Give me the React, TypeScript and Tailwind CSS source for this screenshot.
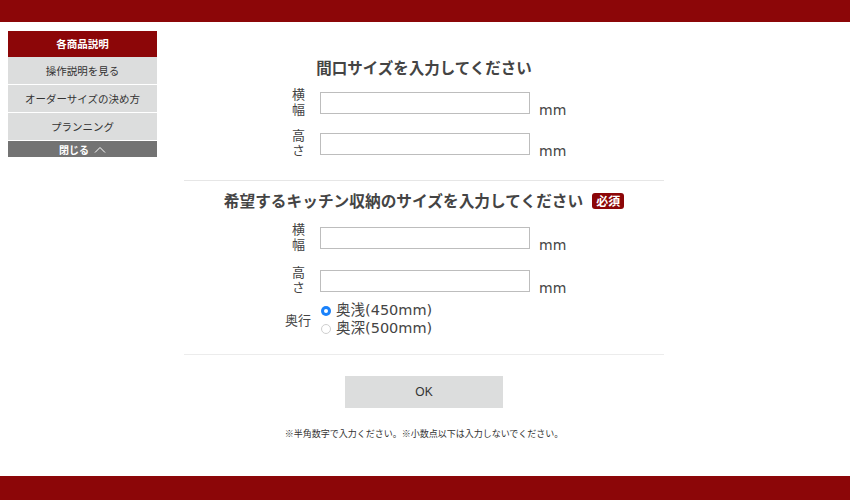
const jp = "font-['Noto_Sans_CJK_JP',sans-serif]"

const SizeRow = ({ label }: { label: string }) => (
  <div className="flex h-[30px] items-start pl-[100px]">
    <div className="flex w-[28px] justify-center">
      <span className="text-[13px] leading-[14px] tracking-[2px] text-[#444] [writing-mode:vertical-rl]">
        {label}
      </span>
    </div>
    <input
      type="text"
      className="ml-[8px] mt-[4px] h-[22px] w-[210px] border border-[#bdbdbd] bg-white outline-none"
    />
    <span className="ml-[9px] mt-[15px] font-['DejaVu_Sans',sans-serif] text-[14px] leading-[15px] text-[#444]">
      mm
    </span>
  </div>
)

const Radio = ({ checked, label }: { checked?: boolean; label: string }) => (
  <label className="flex h-[18px] items-center">
    {checked ? (
      <span className="flex h-[10px] w-[10px] items-center justify-center rounded-full bg-[#1a82fb]">
        <span className="h-[4px] w-[4px] rounded-full bg-white" />
      </span>
    ) : (
      <span className="h-[10px] w-[10px] rounded-full border border-[#cfcfcf] bg-white" />
    )}
    <span className="ml-[5px] font-['DejaVu_Sans','Noto_Sans_CJK_JP',sans-serif] text-[14.5px] text-[#444]">
      {label}
    </span>
  </label>
)

const Sidebar = () => (
  <nav className={`ml-2 mt-[9px] w-[149px] self-start text-center text-[10.5px] ${jp}`}>
    <div className="flex h-[26px] items-center justify-center bg-[#8c0608] font-bold text-white">
      各商品説明
    </div>
    {['操作説明を見る', 'オーダーサイズの決め方', 'プランニング'].map((t) => (
      <div
        key={t}
        className="flex h-[28px] items-center justify-center border-b border-white bg-[#dcdddd] text-[#333]"
      >
        {t}
      </div>
    ))}
    <div className="flex h-[16px] items-center justify-center gap-[5px] bg-[#737373] text-[10px] font-bold text-white">
      閉じる
      <svg width="12" height="7" viewBox="0 0 12 7" fill="none">
        <polyline points="1,6.5 6,1.5 11,6.5" stroke="white" strokeWidth="1" />
      </svg>
    </div>
  </nav>
)

export default function App() {
  return (
    <div className={`flex h-[500px] w-[850px] flex-col bg-white ${jp}`}>
      <div className="h-[22px] bg-[#8c0608]" />
      <div className="flex flex-1">
        <Sidebar />
        <main className="ml-[27px] w-[480px]">
          <h2 className="mt-[35px] text-center text-[15.5px] font-bold leading-[20px] text-[#444]">
            間口サイズを入力してください
          </h2>
          <div className="mt-[11px]">
            <SizeRow label="横幅" />
          </div>
          <div className="mt-[11px]">
            <SizeRow label="高さ" />
          </div>

          <div className="mt-[21px] h-px bg-[#e6e6e6]" />

          <div className="mt-[10px] flex items-center justify-center gap-[9px]">
            <h2 className="text-[15.7px] font-bold leading-[20px] text-[#444]">
              希望するキッチン収納のサイズを入力してください
            </h2>
            <span className="flex h-[16px] w-[32px] items-center justify-center rounded-[3px] bg-[#8c0608] text-[12px] font-bold text-white">
              必須
            </span>
          </div>
          <div className="mt-[12px]">
            <SizeRow label="横幅" />
          </div>
          <div className="mt-[13px]">
            <SizeRow label="高さ" />
          </div>

          <div className="mt-[6px] flex items-center pl-[100px]">
            <div className="w-[28px] text-center text-[13px] text-[#444]">奥行</div>
            <div className="ml-[9px] flex flex-col">
              <Radio checked label="奥浅(450mm)" />
              <Radio label="奥深(500mm)" />
            </div>
          </div>

          <div className="mt-[16px] h-px bg-[#ececec]" />

          <div className="mt-[21px] flex justify-center">
            <button
              type="button"
              className="h-[32px] w-[158px] bg-[#dcdddd] font-['Liberation_Sans',sans-serif] text-[12px] text-[#333]"
            >
              OK
            </button>
          </div>
          <p className="mt-[20px] text-center text-[9px] leading-[12px] text-[#333]">
            ※半角数字で入力ください。※小数点以下は入力しないでください。
          </p>
        </main>
      </div>
      <div className="h-[24px] bg-[#8c0608]" />
    </div>
  )
}
